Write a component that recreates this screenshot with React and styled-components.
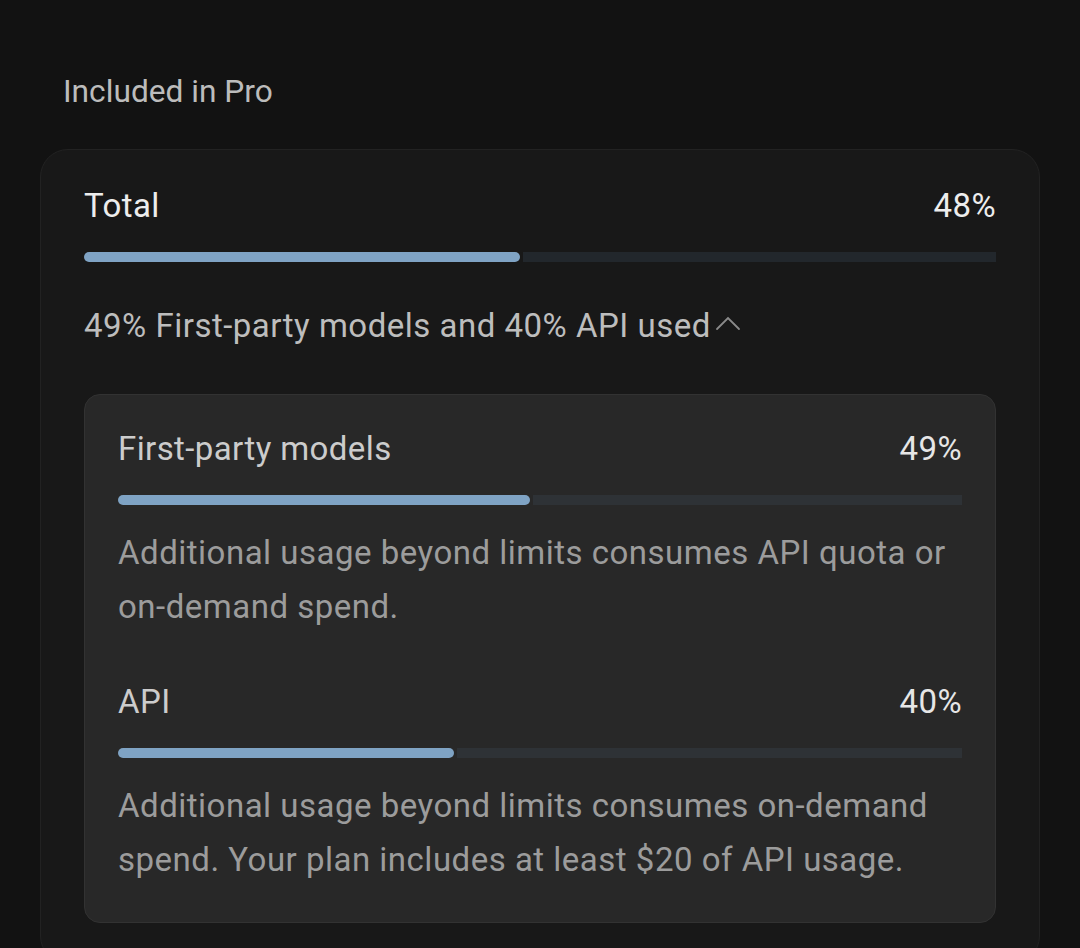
import styled, { createGlobalStyle } from "styled-components";

const GlobalStyle = createGlobalStyle`
  html, body {
    margin: 0;
    padding: 0;
    background: #121212;
  }
  body {
    font-family: Roboto, "Noto Sans", "Liberation Sans", sans-serif;
    -webkit-font-smoothing: antialiased;
  }
`;

const Page = styled.div`
  min-height: 948px;
  box-sizing: border-box;
  padding: 72px 40px 0 40px;
  background: #121212;
`;

const Heading = styled.h2`
  margin: 0 0 37px 23px;
  font-size: 31.7px;
  line-height: 40px;
  font-weight: 400;
  color: #bcbcbc;
`;

const Card = styled.section`
  background: #181818;
  border: 1px solid #222222;
  border-radius: 28px;
  padding: 36px 43px 40px 43px;
`;

const Row = styled.div`
  display: flex;
  justify-content: space-between;
  align-items: baseline;
  font-size: 33px;
  line-height: 40px;
  letter-spacing: 0.4px;
  color: ${(p) => p.$color};
`;

const Bar = styled.div`
  display: flex;
  height: 10px;
  margin-top: ${(p) => p.$top}px;
`;

const Fill = styled.div`
  height: 100%;
  background: #7fa3c4;
  border-radius: 5px;
  flex: none;
`;

const Track = styled.div`
  flex: 1;
  height: 100%;
  margin-left: 3px;
  background: ${(p) => p.$color};
`;

const Summary = styled.button`
  display: flex;
  align-items: center;
  margin: 44px 0 0 0;
  padding: 0;
  border: none;
  background: none;
  font-family: inherit;
  font-size: 33px;
  line-height: 40px;
  letter-spacing: 0.5px;
  color: #bdbdbd;
  cursor: pointer;
`;

const Chevron = styled.svg`
  width: 28px;
  height: 16px;
  margin-left: 3px;
  margin-top: -6px;
`;

const Panel = styled.div`
  margin-top: 48px;
  background: #282828;
  border: 1px solid #323232;
  border-radius: 16px;
  padding: 34px 33px 35px 33px;
`;

const Item = styled.div`
  & + & {
    margin-top: 48px;
  }
`;

const Note = styled.p`
  margin: 21px 0 0 0;
  font-size: 33px;
  line-height: 54px;
  letter-spacing: 0.5px;
  color: #9c9c9c;
`;

const ProgressBar = ({ value, top, track }) => (
  <Bar $top={top}>
    <Fill style={{ width: `calc(${value}% - 2px)` }} />
    <Track $color={track} />
  </Bar>
);

const items = [
  {
    name: "First-party models",
    value: 49,
    note: "Additional usage beyond limits consumes API quota or on-demand spend.",
  },
  {
    name: "API",
    value: 40,
    note: "Additional usage beyond limits consumes on-demand spend. Your plan includes at least $20 of API usage.",
  },
];

const App = () => {
  return (
    <>
      <GlobalStyle />
      <Page>
        <Heading>Included in Pro</Heading>
        <Card>
          <Row $color="#ededed">
            <span>Total</span>
            <span>48%</span>
          </Row>
          <ProgressBar value={48} top={26} track="#22272c" />
          <Summary>
            49% First-party models and 40% API used
            <Chevron viewBox="0 0 28 16" fill="none" stroke="#8a8a8a" strokeWidth="1.8" strokeLinecap="round">
              <path d="M3 14L14 3l11 11" />
            </Chevron>
          </Summary>
          <Panel>
            {items.map((item) => (
              <Item key={item.name}>
                <Row $color="#cccccc">
                  <span>{item.name}</span>
                  <span style={{ color: "#e6e6e6" }}>{item.value}%</span>
                </Row>
                <ProgressBar value={item.value} top={26} track="#2e3236" />
                <Note>{item.note}</Note>
              </Item>
            ))}
          </Panel>
        </Card>
      </Page>
    </>
  );
};

export default App;
